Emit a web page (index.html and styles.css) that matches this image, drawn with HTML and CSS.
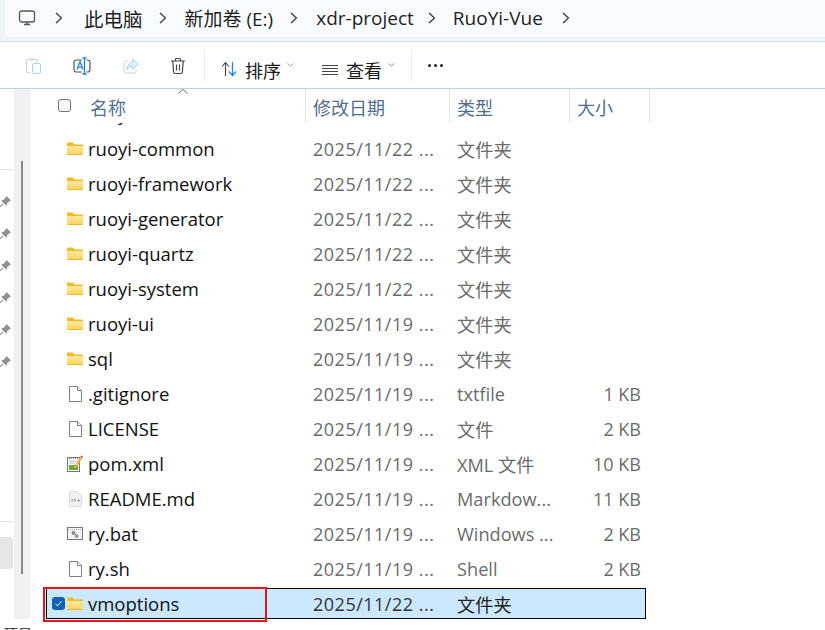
FILE: index.html
```html
<!DOCTYPE html>
<html lang="zh-CN">
<head>
<meta charset="utf-8">
<title>RuoYi-Vue</title>
<link rel="stylesheet" href="styles.css">
</head>
<body>
<div class="window">
  <div class="crumbs">
  <nav class="crumb-bar">
    <svg class="pc" width="18" height="18" viewBox="0 0 18 18"><rect x="1.500" y="2" width="15" height="11" rx="2" fill="none" stroke="#555" stroke-width="1.300"/><path d="M6 15.500h6M9 13v2" stroke="#555" stroke-width="1.500"/></svg>
    <svg class="sep s1" width="8" height="12" viewBox="0 0 8 12"><path d="M1 1l5.500 5-5.500 5" fill="none" stroke="#333" stroke-width="1.200"/></svg>
    <span class="crumb c1">此电脑</span>
    <svg class="sep s2" width="8" height="12" viewBox="0 0 8 12"><path d="M1 1l5.500 5-5.500 5" fill="none" stroke="#333" stroke-width="1.200"/></svg>
    <span class="crumb c2">新加卷 (E:)</span>
    <svg class="sep s3" width="8" height="12" viewBox="0 0 8 12"><path d="M1 1l5.500 5-5.500 5" fill="none" stroke="#333" stroke-width="1.200"/></svg>
    <span class="crumb c3">xdr-project</span>
    <svg class="sep s4" width="8" height="12" viewBox="0 0 8 12"><path d="M1 1l5.500 5-5.500 5" fill="none" stroke="#333" stroke-width="1.200"/></svg>
    <span class="crumb c4">RuoYi-Vue</span>
    <svg class="sep s5" width="8" height="12" viewBox="0 0 8 12"><path d="M1 1l5.500 5-5.500 5" fill="none" stroke="#333" stroke-width="1.200"/></svg>
  </nav>
  </div>
  <div class="toolbar">
    <svg class="tool t1" width="16" height="18" viewBox="0 0 16 18"><path d="M4 15.500H2A1.500 1.500 0 0 1 .5 14V4A1.500 1.500 0 0 1 2 2.500h8A1.500 1.500 0 0 1 11.500 4v1" fill="none" stroke="#cfcfcf"/><rect x="3.500" y="1" width="5" height="3" rx="1" fill="#e0e0e0"/><rect x="6.500" y="6.500" width="8" height="10" rx="1.500" fill="none" stroke="#a9d2f0"/></svg>
    <svg class="tool t2" width="18" height="18" viewBox="0 0 18 18"><path d="M9 3H3.500a2.500 2.500 0 0 0-2.500 2.500v7A2.500 2.500 0 0 0 3.500 15H9M13.500 3h1a2.500 2.500 0 0 1 2.500 2.500v7a2.500 2.500 0 0 1-2.500 2.500h-1" fill="none" stroke="#555" stroke-width="1.200"/><path d="M4 12.500L7 4.500l3 8M5 10.200h4" fill="none" stroke="#1a86d8" stroke-width="1.300"/><path d="M11.500 1v16M9.500 1h4M9.500 17h4" stroke="#1a86d8" stroke-width="1.300" fill="none"/></svg>
    <svg class="tool t3" width="16" height="18" viewBox="0 0 16 18"><path d="M5 4H2.500a1.500 1.500 0 0 0-1.500 1.500v9A1.500 1.500 0 0 0 2.500 16h9a1.500 1.500 0 0 0 1.500-1.500V12" fill="none" stroke="#d0d0d0"/><path d="M9.500 2l6 5-6 5V9C7 9 5.500 10 4 13c.5-5 2.500-7.500 5.500-8z" fill="#e4f1fa" stroke="#a9d2f0"/></svg>
    <svg class="tool t4" width="16" height="18" viewBox="0 0 16 18"><path d="M1 4h14M5.500 4V2.500a1 1 0 0 1 1-1h3a1 1 0 0 1 1 1V4M2.800 4l.8 11a1.500 1.500 0 0 0 1.500 1.500h5.800a1.500 1.500 0 0 0 1.500-1.500l.8-11M6.500 7.500v6M9.500 7.500v6" fill="none" stroke="#444" stroke-width="1.200"/></svg>
    <span class="divider d1"></span>
    <svg class="tool t5" width="17" height="16" viewBox="0 0 17 16"><path d="M4.500 15V2M1 5.500l3.500-4 3.500 4" fill="none" stroke="#444" stroke-width="1.100"/><path d="M11.500 1v13M8 10.500l3.500 4 3.500-4" fill="none" stroke="#1a86d8" stroke-width="1.200"/></svg>
    <span class="tool-label l1">排序</span>
    <svg class="caret c-a" width="7" height="4" viewBox="0 0 7 4"><path d="M.5.500l3 2.500 3-2.500" fill="none" stroke="#999"/></svg>
    <svg class="tool t6" width="16" height="12" viewBox="0 0 16 12"><path d="M0 1.500h16M0 4.500h16M0 7.500h16M0 10.500h16" stroke="#444"/></svg>
    <span class="tool-label l2">查看</span>
    <svg class="caret c-b" width="7" height="4" viewBox="0 0 7 4"><path d="M.5.500l3 2.500 3-2.500" fill="none" stroke="#999"/></svg>
    <span class="divider d2"></span>
    <span class="more"><i></i><i></i><i></i></span>
  </div>
  <div class="body">
    <aside class="nav">
      <hr class="nav-line first">
      <ul class="pins">
        <li><svg width="11" height="11" viewBox="0 0 10 10"><use href="#pin"/></svg></li>
        <li><svg width="11" height="11" viewBox="0 0 10 10"><use href="#pin"/></svg></li>
        <li><svg width="11" height="11" viewBox="0 0 10 10"><use href="#pin"/></svg></li>
        <li><svg width="11" height="11" viewBox="0 0 10 10"><use href="#pin"/></svg></li>
        <li><svg width="11" height="11" viewBox="0 0 10 10"><use href="#pin"/></svg></li>
        <li><svg width="11" height="11" viewBox="0 0 10 10"><use href="#pin"/></svg></li>
      </ul>
      <hr class="nav-line second">
      <div class="nav-active"></div>
    </aside>
    <div class="scrollbar"><div class="thumb"></div></div>
    <main class="files">
      <div class="head">
        <span class="head-check"></span>
        <span class="hc name">名称<svg class="sort" width="10" height="5" viewBox="0 0 10 5"><path d="M.5 4.500l4.500-4 4.500 4" fill="none" stroke="#666"/></svg></span>
        <span class="hc date">修改日期</span>
        <span class="hc type">类型</span>
        <span class="hc size">大小</span>
      </div>
      <div class="list">
        <div class="row"><span class="cell name"><span class="spacer"></span>ruoyi-admin</span></div>
        <div class="row"><span class="cell name"><svg class="folder" width="16" height="13" viewBox="0 0 16 13"><use href="#fd"/></svg>ruoyi-common</span><span class="cell date">2025/11/22 ...</span><span class="cell type">文件夹</span><span class="cell size"></span></div>
        <div class="row"><span class="cell name"><svg class="folder" width="16" height="13" viewBox="0 0 16 13"><use href="#fd"/></svg>ruoyi-framework</span><span class="cell date">2025/11/22 ...</span><span class="cell type">文件夹</span><span class="cell size"></span></div>
        <div class="row"><span class="cell name"><svg class="folder" width="16" height="13" viewBox="0 0 16 13"><use href="#fd"/></svg>ruoyi-generator</span><span class="cell date">2025/11/22 ...</span><span class="cell type">文件夹</span><span class="cell size"></span></div>
        <div class="row"><span class="cell name"><svg class="folder" width="16" height="13" viewBox="0 0 16 13"><use href="#fd"/></svg>ruoyi-quartz</span><span class="cell date">2025/11/22 ...</span><span class="cell type">文件夹</span><span class="cell size"></span></div>
        <div class="row"><span class="cell name"><svg class="folder" width="16" height="13" viewBox="0 0 16 13"><use href="#fd"/></svg>ruoyi-system</span><span class="cell date">2025/11/22 ...</span><span class="cell type">文件夹</span><span class="cell size"></span></div>
        <div class="row"><span class="cell name"><svg class="folder" width="16" height="13" viewBox="0 0 16 13"><use href="#fd"/></svg>ruoyi-ui</span><span class="cell date">2025/11/19 ...</span><span class="cell type">文件夹</span><span class="cell size"></span></div>
        <div class="row"><span class="cell name"><svg class="folder" width="16" height="13" viewBox="0 0 16 13"><use href="#fd"/></svg>sql</span><span class="cell date">2025/11/19 ...</span><span class="cell type">文件夹</span><span class="cell size"></span></div>
        <div class="row"><span class="cell name"><svg class="doc" width="13" height="16" viewBox="0 0 13 16"><use href="#pg"/></svg>.gitignore</span><span class="cell date">2025/11/19 ...</span><span class="cell type">txtfile</span><span class="cell size">1 KB</span></div>
        <div class="row"><span class="cell name"><svg class="doc" width="13" height="16" viewBox="0 0 13 16"><use href="#pg"/></svg>LICENSE</span><span class="cell date">2025/11/19 ...</span><span class="cell type">文件</span><span class="cell size">2 KB</span></div>
        <div class="row"><span class="cell name"><svg class="folder" width="16" height="17" viewBox="0 0 16 17"><rect x=".5" y="2.500" width="12" height="14" fill="#fff" stroke="#777"/><path d="M2 3.500h9" stroke="#888" stroke-dasharray="1 1"/><path d="M2 10h9v5H2z" fill="#5fae3e"/><path d="M2 6h9M2 8h6" stroke="#bbb"/><path d="M7.500 11l6-9 1.800 1.200-6 9-2.300 1z" fill="#f4b030"/><path d="M13.500 1.500l1-1 1.300 1-.7 1.500z" fill="#b03030"/></svg>pom.xml</span><span class="cell date">2025/11/19 ...</span><span class="cell type">XML 文件</span><span class="cell size">10 KB</span></div>
        <div class="row"><span class="cell name"><svg class="doc" width="13" height="16" viewBox="0 0 13 16"><path d="M.5.500h8l4 4v11H.5z" fill="#f1f1f1" stroke="#ddd"/><path d="M3 11V8l1.500 1.500L6 8v3M8 9.500h3M9.500 8v3" fill="none" stroke="#999" stroke-width=".8"/></svg>README.md</span><span class="cell date">2025/11/19 ...</span><span class="cell type">Markdow...</span><span class="cell size">11 KB</span></div>
        <div class="row"><span class="cell name"><svg class="folder" width="16" height="13" viewBox="0 0 16 13"><rect x=".5" y=".5" width="15" height="12" fill="#f4f4f4" stroke="#777"/><path d="M1 2.500h14" stroke="#aaa" stroke-dasharray="1 1"/><circle cx="6.500" cy="6" r="2" fill="#888"/><circle cx="9.500" cy="9" r="2" fill="#999"/></svg>ry.bat</span><span class="cell date">2025/11/19 ...</span><span class="cell type">Windows ...</span><span class="cell size">2 KB</span></div>
        <div class="row"><span class="cell name"><svg class="doc" width="13" height="16" viewBox="0 0 13 16"><use href="#pg"/></svg>ry.sh</span><span class="cell date">2025/11/19 ...</span><span class="cell type">Shell</span><span class="cell size">2 KB</span></div>
        <div class="row selected"><span class="row-check"><svg width="13" height="13" viewBox="0 0 13 13"><rect width="13" height="13" rx="3" fill="#0f62b8"/><path d="M3.500 6.800l2 2 4-4.500" fill="none" stroke="#fff"/></svg></span><span class="cell name"><svg class="folder" width="16" height="13" viewBox="0 0 16 13"><use href="#fd"/></svg>vmoptions</span><span class="cell date">2025/11/22 ...</span><span class="cell type">文件夹</span><span class="cell size"></span></div>
      </div>
    </main>
  </div>
  <div class="highlight"></div>
  <div class="status">项目</div>
</div>
<svg class="defs" width="0" height="0">
  <defs>
    <linearGradient id="fg" x1="0" y1="0" x2="0" y2="1"><stop offset="0" stop-color="#ffe9a0"/><stop offset="1" stop-color="#fcd45f"/></linearGradient>
    <g id="fd"><path d="M0 1.500A1 1 0 0 1 1 .5h4.500l2 2H15a1 1 0 0 1 1 1V12a1 1 0 0 1-1 1H1a1 1 0 0 1-1-1z" fill="#f5b81f"/><path d="M0 4h16v7.500a.5.5 0 0 1-.5.5H.5a.5.5 0 0 1-.5-.5z" fill="url(#fg)"/></g>
    <g id="pg"><path d="M.5.500h8l4 4v11H.5z" fill="#fff" stroke="#808080"/><path d="M8.500.500v4h4" fill="#eee" stroke="#808080"/></g>
    <g id="pin"><path d="M6 0l4 4-1 .6-2.500 2L6 9 1 4l2.400-.5L5.400 1z" fill="#909090"/><path d="M3 7L0 10" stroke="#909090"/></g>
  </defs>
</svg>
</body>
</html>
```
FILE: styles.css
```css
* { box-sizing: border-box; }
html, body { margin: 0; padding: 0; }
body { width: 825px; height: 630px; overflow: hidden; background: #fff; font-family: "Open Sans", "Noto Sans CJK SC", sans-serif; color: #1b1b1b; }
.window { position: relative; width: 825px; height: 630px; overflow: hidden; display: flex; flex-direction: column; }
.defs { position: absolute; }

.crumbs { height: 42px; flex: none; padding: 0 0 4px 5px; background: #eef5f8; border-bottom: 1px solid #cfe0e4; }
.crumb-bar { height: 37px; padding: 0 0 1px 13px; display: flex; align-items: center; background: #f8fcfe; border-radius: 0 0 0 6px; font-size: 19px; }
.sep { flex: none; }
.crumb { white-space: nowrap; color: #1f1f1f; }
.s1 { margin-left: 19px; }
.c1 { margin-left: 21px; font-size: 19.5px; }
.s2 { margin-left: 16px; }
.c2 { margin-left: 18px; }
.s3 { margin-left: 17px; }
.c3 { margin-left: 18px; }
.s4 { margin-left: 14px; }
.c4 { margin-left: 17px; }
.s5 { margin-left: 19px; }

.toolbar { height: 47px; flex: none; display: flex; align-items: center; padding-left: 26px; border-bottom: 1px solid #b5d5da; background: #fff; }
.tool { flex: none; }
.t1, .t2, .t3, .t4 { margin-top: 2px; }
.t2 { margin-left: 31px; }
.t3 { margin-left: 32px; }
.t4 { margin-left: 31px; }
.divider { width: 1px; height: 32px; background: #ececec; }
.d1 { margin-left: 18px; }
.t5 { margin-left: 16px; margin-top: 8px; }
.tool-label { font-size: 18px; margin-left: 7px; margin-top: 10px; }
.l2 { margin-left: 8px; }
.caret { margin-left: 6px; margin-bottom: 0; }
.t6 { margin-left: 28px; margin-top: 10px; }
.d2 { margin-left: 16px; }
.more { display: flex; gap: 3px; margin-left: 16px; margin-bottom: 0; }
.more i { width: 3px; height: 3px; border-radius: 50%; background: #222; }

.body { flex: 1; display: flex; min-height: 0; }
.nav { width: 14px; flex: none; padding-top: 80px; overflow: hidden; }
.nav-line { margin: 0; border: 0; height: 1px; background: #e5e5e5; width: 14px; }
.pins { list-style: none; margin: 26px 0 0; padding: 0; display: flex; flex-direction: column; gap: 21px; }
.pins li { height: 11px; display: flex; }
.nav-line.second { margin-top: 154px; }
.nav-active { width: 13px; height: 32px; margin-top: 15px; background: #e5e5e5; border-radius: 0 3px 3px 0; }
.scrollbar { width: 16px; height: 530px; flex: none; background: #f0f0f0; padding: 72px 0 0 7px; box-shadow: 2px 0 0 #fafafa; }
.thumb { width: 2px; height: 413px; background: #8a8a8a; }

.files { flex: 1; min-width: 0; display: flex; flex-direction: column; height: 530px; }
.head { height: 34px; flex: none; display: flex; position: relative; color: #4f6f8f; font-size: 18px; }
.head-check { position: absolute; left: 28px; top: 10px; width: 13px; height: 13px; border: 1px solid #767676; border-radius: 3px; background: #f8f8f8; }
.hc { height: 34px; padding-top: 1px; display: flex; align-items: center; border-right: 1px solid #e5e5e5; }
.hc.name { width: 276px; padding-left: 60px; position: relative; }
.sort { position: absolute; left: 148px; top: 0; }
.hc.date { width: 144px; padding-left: 7px; }
.hc.type { width: 120px; padding-left: 7px; }
.hc.size { width: 80px; padding-left: 7px; }
.list { flex: 1; min-height: 0; display: flex; flex-direction: column; justify-content: flex-end; overflow: hidden; }
.row { height: 35px; flex: none; display: flex; align-items: center; font-size: 18px; position: relative; }
.cell { white-space: nowrap; }
.cell.name { width: 276px; padding-left: 37px; display: flex; align-items: center; color: #111; font-size: 18.500px; }
.spacer { width: 21px; flex: none; }
.cell.date { width: 144px; padding-left: 7px; color: #6b6b6b; letter-spacing: .5px; }
.cell.type { width: 120px; padding-left: 7px; color: #6b6b6b; font-size: 18.200px; }
.cell.size { width: 71px; text-align: right; color: #6b6b6b; }
.folder, .doc { flex: none; }
.folder { margin-right: 5px; }
.doc { margin: 0 6px 0 2px; }
.row.selected { margin: 2px 0 0 16px; width: 600px; height: 31px; background: #cce8ff; border: 1px solid #000; }
.selected .cell.name { width: 259px; padding-left: 20px; }
.selected .cell.date { color: #333; }
.selected .cell.type { color: #222; }
.row-check { position: absolute; left: 5px; top: 8px; display: flex; }
.highlight { position: absolute; left: 43px; top: 587px; width: 224px; height: 35px; border: 2px solid #e8141c; }
.status { position: absolute; left: 4px; top: 626px; font-size: 14px; line-height: 16px; color: #444; }
```
